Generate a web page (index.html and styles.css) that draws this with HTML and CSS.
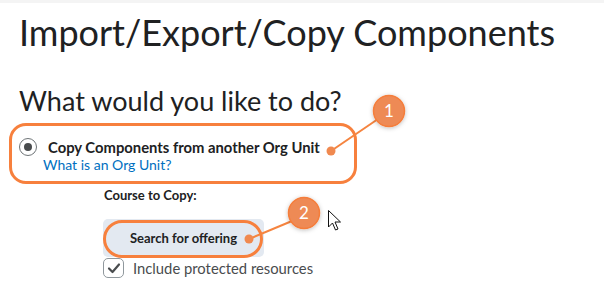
FILE: index.html
```html
<!DOCTYPE html>
<html lang="en">
<head>
  <meta charset="UTF-8" />
  <title>Import/Export/Copy Components</title>
  <link rel="stylesheet" href="styles.css">
</head>
<body>
  <div class="topbar"></div>
  <main class="page">
    <h1>Import/Export/Copy Components</h1>
    <h2>What would you like to do?</h2>

    <div class="option">
      <div class="option-row">
        <span class="radio"><span class="radio-dot"></span></span>
        <span class="option-label">Copy Components from another Org Unit</span>
      </div>
      <a class="help-link" href="#">What is an Org Unit?</a>
    </div>

    <div class="copy-section">
      <div class="field-label">Course to Copy:</div>
      <button class="search-btn" type="button">Search for offering</button>
      <label class="check-row">
        <span class="checkbox">
          <svg width="14" height="12" viewBox="0 0 14 12"><path d="M2 6.5 L5.5 10 L12 2.5" fill="none" stroke="#494c4e" stroke-width="2.2" stroke-linecap="round" stroke-linejoin="round"/></svg>
        </span>
        Include protected resources
      </label>
    </div>
  </main>

  <!-- annotation layer -->
  <svg class="callouts" width="604" height="302" viewBox="0 0 604 302">
    <defs>
      <filter id="shadow" x="-50%" y="-50%" width="200%" height="200%">
        <feDropShadow dx="0" dy="1" stdDeviation="2" flood-color="#000" flood-opacity="0.25"/>
      </filter>
    </defs>
    <line x1="378" y1="119" x2="331" y2="151" stroke="#f5843f" stroke-width="2"/>
    <circle cx="331" cy="151" r="4.5" fill="#f0894f"/>
    <circle cx="389" cy="111" r="15.5" fill="#ee8a55" stroke="#f57d3a" stroke-width="1.5" filter="url(#shadow)"/>
    <text x="389" y="117" class="num">1</text>

    <line x1="292" y1="221" x2="249" y2="239" stroke="#f5843f" stroke-width="2"/>
    <circle cx="249" cy="239" r="4.5" fill="#f0894f"/>
    <circle cx="304" cy="213" r="15.5" fill="#ee8a55" stroke="#f57d3a" stroke-width="1.5" filter="url(#shadow)"/>
    <text x="304" y="219" class="num">2</text>

    <path d="M328.5 210.5 L328.5 227 L332.5 223 L335.5 230 L338 229 L335 222 L340.5 222 Z" fill="#fff" stroke="#111" stroke-width="1" stroke-linejoin="round"/>
  </svg>
</body>
</html>
```

FILE: styles.css
```css
body {
  font-family: Lato, "Open Sans", sans-serif;
  background: #fff;
  color: #202122;
  margin: 0;
  padding: 0;
  position: relative;
  width: 604px;
  height: 302px;
  overflow: hidden;
}
.topbar {
  height: 3px;
  background: #f4f4f4;
}
.page {
  padding-left: 19px;
}
h1 {
  font-size: 36px;
  font-weight: 400;
  line-height: 44px;
  margin: 7px 0 0;
}
h2 {
  font-size: 27px;
  font-weight: 400;
  line-height: 32px;
  margin: 31px 0 0;
}
.option {
  margin: 6px 0 0 -10px;
  width: 335px;
  border: 3px solid #f7803d;
  border-radius: 17px;
  padding: 12px 0 8px 7px;
}
.option-row {
  display: flex;
  align-items: flex-start;
  gap: 11px;
}
.radio {
  width: 18px;
  height: 18px;
  box-sizing: border-box;
  border: 1.5px solid #6e7477;
  border-radius: 50%;
  display: flex;
  align-items: center;
  justify-content: center;
}
.radio-dot {
  width: 8px;
  height: 8px;
  border-radius: 50%;
  background: #494c4e;
}
.option-label {
  font-size: 14.8px;
  font-weight: 700;
  line-height: 18px;
}
.help-link {
  display: block;
  margin-left: 24px;
  font-size: 14px;
  line-height: 17px;
  color: #006fbf;
  text-decoration: none;
}
.copy-section {
  margin-left: 85px;
  margin-top: 3px;
}
.field-label {
  font-size: 13px;
  font-weight: 700;
  line-height: 17px;
}
.search-btn {
  position: relative;
  display: block;
  margin-top: 15px;
  margin-left: -1px;
  width: 161px;
  height: 38px;
  border: none;
  border-radius: 5px;
  background: #e3e9f1;
  color: #202122;
  font-family: inherit;
  font-size: 13px;
  font-weight: 700;
}
.search-btn::after {
  content: "";
  position: absolute;
  left: 0;
  top: 1px;
  right: 1px;
  bottom: -1px;
  border: 3px solid #f7803d;
  border-radius: 20px;
}
.check-row {
  display: flex;
  align-items: center;
  gap: 9px;
  margin-top: 1px;
  margin-left: -1px;
  font-size: 14.8px;
  line-height: 20px;
  color: #494c4e;
}
.checkbox {
  width: 21px;
  height: 20px;
  box-sizing: border-box;
  border: 1.5px solid #90989d;
  border-radius: 5px;
  display: flex;
  align-items: center;
  justify-content: center;
}
.callouts {
  position: absolute;
  left: 0;
  top: 0;
}
.num {
  fill: #fff;
  font-family: Lato, sans-serif;
  font-size: 17px;
  text-anchor: middle;
}
```
